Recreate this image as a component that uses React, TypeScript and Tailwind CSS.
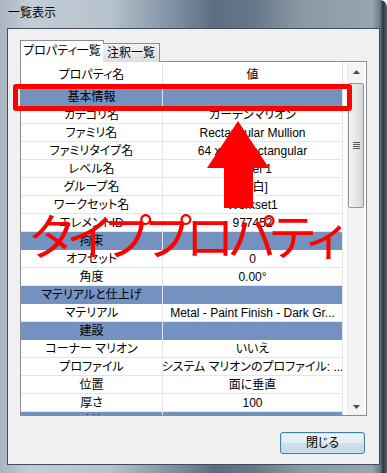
import React from "react";

type Row = { g?: string; k?: string; v?: string };

const rows: Row[] = [
  { g: "基本情報" },
  { k: "カテゴリ名", v: "カーテンマリオン" },
  { k: "ファミリ名", v: "Rectangular Mullion" },
  { k: "ファミリタイプ名", v: "64 x 128 rectangular" },
  { k: "レベル名", v: "Level 1" },
  { k: "グループ名", v: "[空白]" },
  { k: "ワークセット名", v: "Workset1" },
  { k: "エレメントID", v: "977452" },
  { g: "拘束" },
  { k: "オフセット", v: "0" },
  { k: "角度", v: "0.00°" },
  { g: "マテリアルと仕上げ" },
  { k: "マテリアル", v: "Metal - Paint Finish - Dark Gr..." },
  { g: "建設" },
  { k: "コーナー マリオン", v: "いいえ" },
  { k: "プロファイル", v: "システム マリオンのプロファイル: ..." },
  { k: "位置", v: "面に垂直" },
  { k: "厚さ", v: "100" },
  { g: "寸法" },
];

export default function App() {
  return (
    <div className="relative w-[387px] h-[473px] overflow-hidden rounded-tr-[7px] flex flex-col bg-[linear-gradient(90deg,#a9b5c0_0px,#c4cdd6_30px,#b6c2cc_110px,#8597a8_165px,#5b6d80_215px,#66788a_255px,#8a99a6_300px,#98a5b0_372px,#6d7b88_380px,#2c3743_383px,#56636f_387px)] font-['Liberation_Sans','Noto_Sans_CJK_JP',sans-serif] [font-feature-settings:'palt'] text-black">
      {/* title bar */}
      <div className="h-[28px] shrink-0 pl-[8px] pt-[5px] text-[12px] leading-[16px] text-black">
        一覧表示
      </div>

      {/* client area */}
      <div className="mx-[7px] mb-[8px] flex-1 border border-[#3f4e5d] bg-[#f0f0f0] flex flex-col px-[12px] pt-[11px]">
        {/* tabs */}
        <div className="relative z-10 flex items-end h-[22px]">
          <div className="h-[22px] w-[84px] bg-white border border-b-0 border-[#898c95] flex items-center justify-center text-[12px] leading-none pb-[1px]">
            プロパティ一覧
          </div>
          <div className="h-[19px] w-[57px] -ml-px border border-b-0 border-l-0 border-[#898c95] bg-[linear-gradient(180deg,#f3f3f3,#dedede)] flex items-center justify-center text-[12px] leading-none">
            注釈一覧
          </div>
        </div>

        {/* tab panel */}
        <div className="h-[355px] -mt-px border border-[#898c95] bg-white flex overflow-hidden">
          <div className="w-[322px] h-[353px] overflow-hidden flex flex-col text-[12px]">
            {/* header */}
            <div className="h-[26px] shrink-0 flex">
              <div className="w-[142px] border-r border-[#e3e3e3] flex items-center justify-center">
                プロパティ名
              </div>
              <div className="w-[180px] border-r border-[#e3e3e3] flex items-center justify-center">
                値
              </div>
            </div>
            {rows.map((r, i) =>
              r.g ? (
                <div key={i} className="h-[18px] shrink-0 flex bg-[#7392c0]">
                  <div className="w-[142px] border-r border-[#dfe6f0] flex items-center justify-center">
                    {r.g}
                  </div>
                  <div className="w-[180px] border-r border-[#dfe6f0]" />
                </div>
              ) : (
                <div key={i} className="h-[18px] shrink-0 flex">
                  <div className="w-[142px] border-r border-b border-[#e6e6e6] flex items-center justify-center whitespace-nowrap">
                    {r.k}
                  </div>
                  <div className="w-[180px] border-r border-b border-[#e6e6e6] flex items-center justify-center whitespace-nowrap overflow-hidden">
                    {r.v}
                  </div>
                </div>
              )
            )}
          </div>
          <div className="w-[4px]" />
          {/* scrollbar */}
          <div className="w-[17px] mt-px flex flex-col bg-[#f4f4f4] border-l border-[#ececec]">
            <div className="h-[17px] shrink-0 flex items-center justify-center">
              <svg width="7" height="4" viewBox="0 0 7 4">
                <polygon points="3.5,0 7,4 0,4" fill="#4a4a4a" />
              </svg>
            </div>
            <div className="h-[125px] mt-[3px] shrink-0 rounded-[2px] border border-[#979797] bg-[linear-gradient(90deg,#f4f4f4,#e4e4e4_60%,#d4d4d4)] flex items-center justify-center">
              <div className="flex flex-col gap-[1px]">
                <div className="w-[7px] h-px bg-[#5a5a5a]" />
                <div className="w-[7px] h-px bg-[#5a5a5a]" />
                <div className="w-[7px] h-px bg-[#5a5a5a]" />
                <div className="w-[7px] h-px bg-[#5a5a5a]" />
              </div>
            </div>
            <div className="flex-1" />
            <div className="h-[17px] shrink-0 flex items-center justify-center">
              <svg width="7" height="4" viewBox="0 0 7 4">
                <polygon points="0,0 7,0 3.5,4" fill="#4a4a4a" />
              </svg>
            </div>
          </div>
          <div className="w-[2px]" />
        </div>

        {/* button */}
        <div className="mt-[16px] flex justify-end pr-[2px]">
          <button className="w-[85px] h-[22px] rounded-[3px] border border-[#3c7fb1] bg-[linear-gradient(180deg,#eef4f9_0%,#e2ecf4_50%,#cfdeea_51%,#c6d8e6_100%)] shadow-[inset_0_0_0_1px_#c4e5f6] text-[12px] leading-none flex items-center justify-center">
            閉じる
          </button>
        </div>
      </div>

      {/* red annotations */}
      <div className="absolute left-[13px] top-[84px] w-[339px] h-[27px] border-[5px] border-[#ff0000] rounded-[3px]" />
      <svg className="absolute left-0 top-0 pointer-events-none" width="387" height="473" viewBox="0 0 387 473">
        <polygon points="238,121 269,168 253,168 253,208 224,208 224,168 207,168" fill="#ff0000" />
      </svg>
      <div className="absolute left-[30px] top-[209px] text-[49px] leading-none tracking-[-5px] text-[#ff0000] whitespace-nowrap font-['Noto_Sans_CJK_JP',sans-serif] [font-feature-settings:'palt']">
        タイププロパティ
      </div>
    </div>
  );
}
